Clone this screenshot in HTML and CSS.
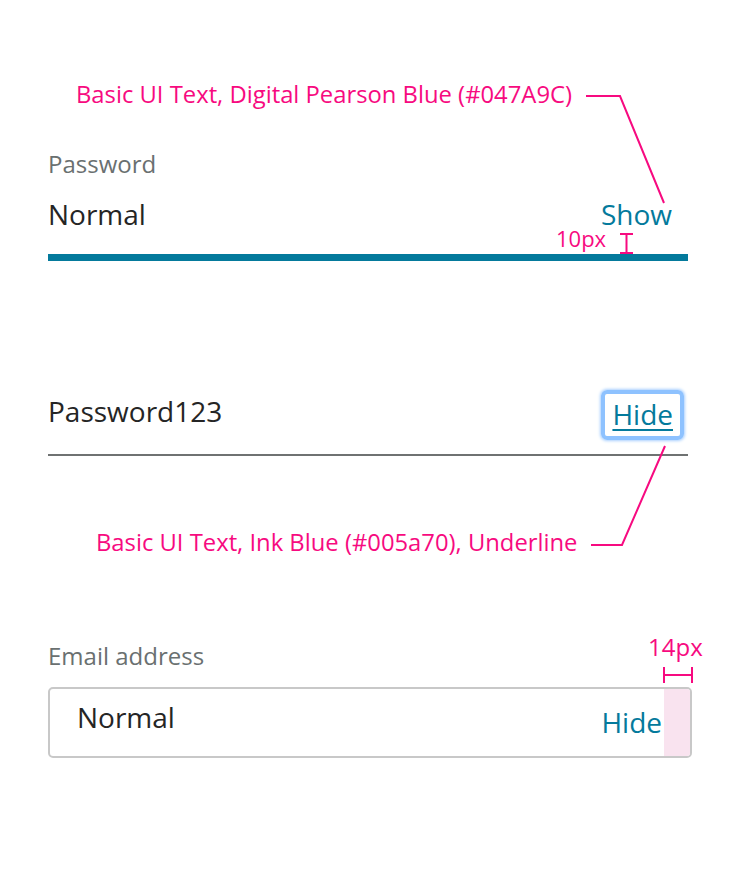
FILE: index.html
```html
<!DOCTYPE html>
<html lang="en">
<head>
<meta charset="utf-8">
<title>Password field spec</title>
<link rel="stylesheet" href="styles.css">
</head>
<body>
<div class="page">
  <p class="note note-1">Basic UI Text, Digital Pearson Blue (#047A9C)</p>

  <section class="field field-1">
    <div class="label">Password</div>
    <div class="row row-1">
      <span class="value">Normal</span>
      <span class="toggle">Show</span>
    </div>
    <div class="bar"></div>
  </section>

  <section class="field field-2">
    <div class="row row-2">
      <span class="value value-2">Password123</span>
      <a class="toggle focus" href="#">Hide</a>
    </div>
  </section>

  <p class="note note-2">Basic UI Text, Ink Blue (#005a70), Underline</p>

  <section class="field field-3">
    <div class="label">Email address</div>
    <div class="box">
      <span class="value value-3">Normal</span>
      <span class="toggle toggle-3">Hide</span>
      <span class="pad"></span>
    </div>
  </section>

  <svg class="overlay" width="740" height="870" viewBox="0 0 740 870" aria-hidden="true">
    <g fill="none" stroke="#f70a80" stroke-width="2">
      <polyline points="586,96 620,96 664,203"/>
      <path d="M620 234H633M626.5 234V253M620 253H633"/>
      <polyline points="665,446 622,545 591,545"/>
      <path d="M664 667V683M692 667V683M664 675H692"/>
    </g>
  </svg>
  <span class="dim dim-10">10px</span>
  <span class="dim dim-14">14px</span>
</div>
</body>
</html>
```

FILE: styles.css
```css
* { box-sizing: border-box; }

html, body {
  margin: 0;
  padding: 0;
  background: #ffffff;
}

body {
  font-family: "Open Sans", "Noto Sans", sans-serif;
  color: #252525;
}

.page {
  position: relative;
  width: 740px;
  height: 870px;
  padding: 82px 0 0 48px;
}

.note {
  margin: 0;
  font-size: 23.8px;
  line-height: 24px;
  color: #f70a80;
  white-space: nowrap;
}

.note-1 { margin-left: 28px; }
.note-2 { margin: 74px 0 0 48px; }

.field { width: 644px; }

.label {
  font-size: 24px;
  line-height: 28px;
  color: #6a7070;
}

.field-1 .label { margin-top: 44px; }
.field-3 .label { margin-top: 88px; }

.row {
  display: flex;
  justify-content: space-between;
  align-items: flex-start;
  width: 640px;
}

.value {
  font-size: 28px;
  line-height: 36px;
  color: #252525;
}

.toggle {
  font-size: 28px;
  line-height: 36px;
  color: #047a9c;
  text-decoration: none;
}

.row-1 {
  margin-top: 18px;
  height: 58px;
}

.row-1 .toggle { margin-right: 16px; }

.bar {
  width: 640px;
  height: 7px;
  background: #047a9c;
}

.field-2 { margin-top: 129px; }

.row-2 {
  padding-bottom: 14px;
  border-bottom: 2px solid #6f7272;
}

.value-2 { margin-top: 3px; }

.focus {
  display: block;
  margin-right: 4px;
  padding: 6px 7px 8px;
  line-height: 28px;
  border: 4px solid #8ec2ff;
  border-radius: 6px;
  box-shadow: 0 0 3px 1px #a9d0ff;
  text-decoration: underline;
  text-decoration-thickness: 2px;
  text-underline-offset: 4px;
}

.box {
  display: flex;
  align-items: stretch;
  margin-top: 17px;
  width: 644px;
  height: 71px;
  border: 2px solid #c8c8c8;
  border-radius: 5px;
  padding-left: 27px;
  overflow: hidden;
}

.value-3 {
  margin-top: 10px;
  flex: 1;
}

.toggle-3 {
  margin-top: 15px;
  margin-right: 2px;
}

.pad {
  width: 26px;
  background: #f9e3ef;
}

.overlay {
  position: absolute;
  top: 0;
  left: 0;
  pointer-events: none;
}

.dim {
  position: absolute;
  line-height: 24px;
  color: #f70a80;
}

.dim-10 { left: 556px; top: 226px; font-size: 22px; }
.dim-14 { left: 648px; top: 635px; font-size: 24px; }
```
